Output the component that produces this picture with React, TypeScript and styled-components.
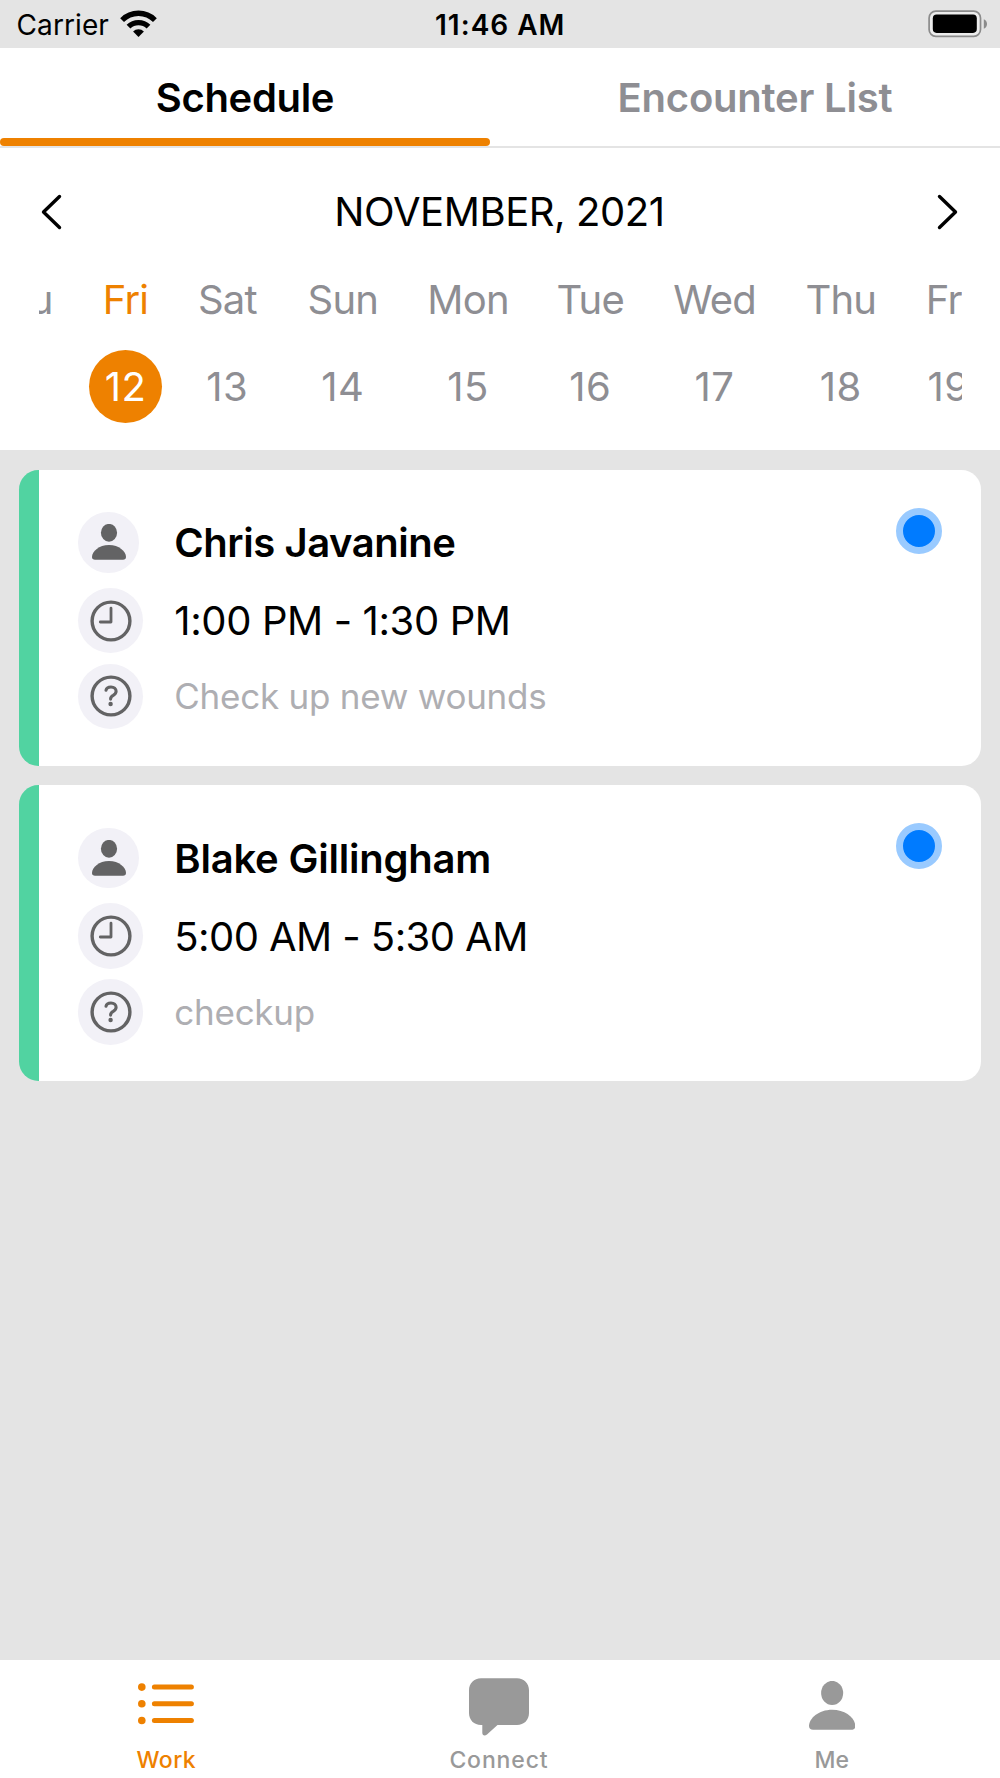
import React from "react";
import styled, { createGlobalStyle } from "styled-components";

const GlobalStyle = createGlobalStyle`
  * { box-sizing: border-box; }
  body {
    margin: 0;
    background: #e4e4e4;
    font-family: Inter, "Liberation Sans", sans-serif;
    color: #000;
  }
`;

const ORANGE = "#ee8100";
const GRAY = "#8e8e93";

const Screen = styled.div`
  display: flex;
  flex-direction: column;
  width: 1000px;
  height: 1778px;
  background: #e4e4e4;
  overflow: hidden;
`;

const StatusBar = styled.header`
  display: grid;
  grid-template-columns: 1fr auto 1fr;
  align-items: center;
  height: 48px;
  padding: 2px 13px 0 16.5px;
  font-size: 28px;
  line-height: 46px;
`;

const Carrier = styled.div`
  display: flex;
  align-items: center;
  gap: 11.5px;
  letter-spacing: 0.1px;

  svg { margin-top: -3px; }
`;

const Clock = styled.div`
  margin-right: 3px;
  font-weight: 600;
  font-size: 28px;
  letter-spacing: 1px;
`;

const BatterySlot = styled.div`
  display: flex;
  justify-content: flex-end;
  margin-top: -2px;
`;

const Tabs = styled.nav`
  display: flex;
  justify-content: space-between;
  height: 100px;
  background: #fff;
  border-bottom: 2px solid #e4e4e4;
`;

const Tab = styled.div<{ $active?: boolean }>`
  display: flex;
  flex-direction: column;
  justify-content: flex-end;
  width: 490px;
  text-align: center;
  font-size: 40px;
  line-height: 48px;
  font-weight: 600;
  letter-spacing: ${(p) => (p.$active ? -0.34 : -0.22)}px;
  color: ${(p) => (p.$active ? "#000" : GRAY)};

  &::after {
    content: "";
    height: 7.7px;
    margin-top: 16.5px;
    border-radius: 4px;
    background: ${(p) => (p.$active ? ORANGE : "transparent")};
  }
`;

const Calendar = styled.section`
  height: 302px;
  background: #fff;
`;

const MonthBar = styled.div`
  display: flex;
  align-items: center;
  justify-content: space-between;
  height: 128px;
  padding: 0 40.5px 0 39.5px;
`;

const Month = styled.h1`
  margin: 0;
  font-size: 40px;
  line-height: 48px;
  font-weight: 400;
  letter-spacing: -0.42px;
`;

const DayStrip = styled.div`
  display: flex;
  gap: 48px;
  margin: 0 38.5px;
  overflow: hidden;
`;

const Day = styled.div<{ $width: number; $selected?: boolean }>`
  display: flex;
  flex: none;
  flex-direction: column;
  align-items: center;
  width: ${(p) => p.$width}px;
  font-size: 40px;
  line-height: 48px;
  white-space: nowrap;
  color: ${(p) => (p.$selected ? ORANGE : GRAY)};

  &:first-child { margin-left: -58.8px; }
`;

const DayName = styled.span`
  letter-spacing: -0.8px;
`;

const DayNumber = styled.span<{ $selected?: boolean }>`
  flex: none;
  width: 73px;
  height: 73px;
  margin-top: 26px;
  padding-top: 1px;
  line-height: 72px;
  text-align: center;
  letter-spacing: 0.5px;
  border-radius: 50%;
  color: ${(p) => (p.$selected ? "#fff" : GRAY)};
  background: ${(p) => (p.$selected ? ORANGE : "transparent")};
`;

const List = styled.main`
  display: flex;
  flex: 1;
  flex-direction: column;
  gap: 19.5px;
  padding: 19.5px 19.5px 0 19px;
`;

const Card = styled.article`
  display: flex;
  align-items: flex-start;
  height: 296px;
  border-radius: 19.5px;
  background: linear-gradient(to right, #51d3a1 20px, #fff 20px);
  padding: 38px 39px 0 59.3px;
`;

const Details = styled.div`
  display: flex;
  flex: 1;
  flex-direction: column;
  padding-top: 4.5px;
  gap: 10.7px;
`;

const Row = styled.div<{ $tall?: boolean }>`
  display: flex;
  align-items: center;
  height: ${(p) => (p.$tall ? 65.2 : 60.7)}px;

  &:first-child { margin-bottom: 4.6px; }
`;

const IconDisc = styled.div<{ $size: number }>`
  display: flex;
  flex: none;
  align-items: center;
  justify-content: center;
  width: ${(p) => p.$size}px;
  height: ${(p) => p.$size}px;
  margin-right: ${(p) => 96 - p.$size}px;
  border-radius: 50%;
  background: #f2f1f7;
  color: #636364;
`;

const Name = styled.h2<{ $spacing: number }>`
  margin: 1.5px 0 0;
  font-size: 40px;
  line-height: 48px;
  font-weight: 600;
  letter-spacing: ${(p) => p.$spacing}px;
`;

const Time = styled.div<{ $spacing: number }>`
  margin-top: 1px;
  font-size: 40px;
  line-height: 48px;
  letter-spacing: ${(p) => p.$spacing}px;
`;

const Reason = styled.div`
  font-size: 35px;
  line-height: 44px;
  letter-spacing: -0.25px;
  color: #aeaeb2;
`;

const StatusDot = styled.div`
  width: 46px;
  height: 46px;
  border: 7px solid #99caff;
  border-radius: 50%;
  background: #007bff;
`;

const TabBar = styled.footer`
  display: grid;
  grid-template-columns: repeat(3, 1fr);
  height: 118.3px;
  padding-right: 2px;
  background: #fff;
`;

const TabItem = styled.div<{ $active?: boolean }>`
  display: flex;
  flex-direction: column;
  align-items: center;
  color: ${(p) => (p.$active ? ORANGE : "#999")};
`;

const TabIcon = styled.div<{ $lift?: number }>`
  display: flex;
  align-items: center;
  justify-content: center;
  height: 58px;
  margin-top: 18px;
  padding-bottom: ${(p) => p.$lift ?? 0}px;
`;

const TabLabel = styled.span<{ $spacing: number }>`
  margin-top: 10.7px;
  font-size: 23px;
  line-height: 28px;
  font-weight: 500;
  letter-spacing: ${(p) => p.$spacing}px;
`;

const WifiIcon = () => (
  <svg width="37" height="28" viewBox="0 0 37 28" fill="none" stroke="#000">
    <path d="M2.1 10.1A23.2 23.2 0 0 1 34.9 10.1" strokeWidth="5.4" />
    <path d="M8.5 16.7A14.2 14.2 0 0 1 28.5 16.7" strokeWidth="5.4" />
    <path d="M13.1 21.5A7.7 7.7 0 0 1 23.9 21.5L18.5 26.9Z" fill="#000" stroke="none" />
  </svg>
);

const BatteryIcon = () => (
  <svg width="59" height="28" viewBox="0 0 59 28">
    <rect x="1.1" y="1.1" width="51.4" height="25.2" rx="6.8" fill="#ececec" stroke="#8b8b8b" strokeWidth="1.7" />
    <rect x="4.8" y="4.6" width="44" height="18.3" rx="3.8" fill="#000" />
    <path d="M55.8 9.2c2 .7 3.2 2.6 3.2 4.8s-1.2 4.1-3.2 4.8z" fill="#8b8b8b" />
  </svg>
);

const Chevron = ({ right }: { right?: boolean }) => (
  <svg width="22" height="38" viewBox="0 0 22 38" fill="none" stroke="#000" strokeWidth="3.4" strokeLinecap="round" strokeLinejoin="round">
    <path d={right ? "M2.5 3.5L18.5 19L2.5 34.5" : "M19.5 3.5L3.5 19L19.5 34.5"} />
  </svg>
);

const PersonIcon = ({ width }: { width: number }) => (
  <svg width={width} height={width * 1.053} viewBox="0 0 34 35.8" fill="currentColor">
    <ellipse cx="17" cy="8.8" rx="8.1" ry="8.9" />
    <path d="M3 35.8h28c1.9 0 3-1 3-2.7C34 27.5 27 21.1 17 21.1S0 27.5 0 33.1c0 1.7 1.1 2.7 3 2.7z" />
  </svg>
);

const ClockIcon = () => (
  <svg width="42" height="42" viewBox="0 0 42 42" fill="none" stroke="currentColor" strokeLinecap="round" strokeLinejoin="round">
    <circle cx="21" cy="21" r="18.9" strokeWidth="3.4" />
    <path d="M21 8.2V22H10.3" strokeWidth="2.8" />
  </svg>
);

const QuestionIcon = () => (
  <svg width="42" height="42" viewBox="0 0 42 42" fill="none" stroke="currentColor" strokeLinecap="round" strokeLinejoin="round">
    <circle cx="21" cy="21" r="18.9" strokeWidth="3.4" />
    <path d="M16 15.3C16.4 13.1 18.3 12 21 12C24 12 26.1 13.7 26.1 16.2C26.1 18.2 25 19.3 23.2 20.4C21.3 21.5 20.6 22.3 20.6 24.1" strokeWidth="3.1" />
    <circle cx="20.6" cy="29" r="2.2" fill="currentColor" stroke="none" />
  </svg>
);

const ListIcon = () => (
  <svg width="56" height="42" viewBox="0 0 56 42" fill="currentColor">
    {[4.1, 20.8, 37.5].map((y) => (
      <g key={y}>
        <circle cx="3.8" cy={y} r="3.8" />
        <rect x="13.9" y={y - 2.5} width="42" height="5" rx="2.5" />
      </g>
    ))}
  </svg>
);

const ChatIcon = () => (
  <svg width="60" height="58" viewBox="0 0 60 58" fill="currentColor">
    <path d="M12 0.2H48C55 0.2 60 5.2 60 12.2V35C60 42 55 47 48 47H28.5L18 56.4C15.8 58.3 13.3 57.5 13.3 54.8V47H12C5 47 0 42 0 35V12.2C0 5.2 5 0.2 12 0.2Z" />
  </svg>
);

const days = [
  { name: "Thu", number: 11, width: 75.1 },
  { name: "Fri", number: 12, width: 45.5, selected: true },
  { name: "Sat", number: 13, width: 62 },
  { name: "Sun", number: 14, width: 73 },
  { name: "Mon", number: 15, width: 81.5 },
  { name: "Tue", number: 16, width: 66.9 },
  { name: "Wed", number: 17, width: 85.7 },
  { name: "Thu", number: 18, width: 70.8 },
  { name: "Fri", number: 19, width: 48.6 },
];

const appointments = [
  { name: "Chris Javanine", nameSpacing: -0.44, time: "1:00 PM - 1:30 PM", timeSpacing: -0.38, reason: "Check up new wounds" },
  { name: "Blake Gillingham", nameSpacing: -0.21, time: "5:00 AM - 5:30 AM", timeSpacing: -0.56, reason: "checkup" },
];

export default function App() {
  return (
    <Screen>
      <GlobalStyle />
      <StatusBar>
        <Carrier>
          Carrier
          <WifiIcon />
        </Carrier>
        <Clock>11:46 AM</Clock>
        <BatterySlot>
          <BatteryIcon />
        </BatterySlot>
      </StatusBar>
      <Tabs>
        <Tab $active>Schedule</Tab>
        <Tab>Encounter List</Tab>
      </Tabs>
      <Calendar>
        <MonthBar>
          <Chevron />
          <Month>NOVEMBER, 2021</Month>
          <Chevron right />
        </MonthBar>
        <DayStrip>
          {days.map((d) => (
            <Day key={d.number} $width={d.width} $selected={d.selected}>
              <DayName>{d.name}</DayName>
              <DayNumber $selected={d.selected}>{d.number}</DayNumber>
            </Day>
          ))}
        </DayStrip>
      </Calendar>
      <List>
        {appointments.map((a) => (
          <Card key={a.name}>
            <Details>
              <Row>
                <IconDisc $size={60.7}>
                  <PersonIcon width={34} />
                </IconDisc>
                <Name $spacing={a.nameSpacing}>{a.name}</Name>
              </Row>
              <Row $tall>
                <IconDisc $size={65.2}>
                  <ClockIcon />
                </IconDisc>
                <Time $spacing={a.timeSpacing}>{a.time}</Time>
              </Row>
              <Row $tall>
                <IconDisc $size={65.2}>
                  <QuestionIcon />
                </IconDisc>
                <Reason>{a.reason}</Reason>
              </Row>
            </Details>
            <StatusDot />
          </Card>
        ))}
      </List>
      <TabBar>
        <TabItem $active>
          <TabIcon $lift={4.5}>
            <ListIcon />
          </TabIcon>
          <TabLabel $spacing={0.4}>Work</TabLabel>
        </TabItem>
        <TabItem>
          <TabIcon>
            <ChatIcon />
          </TabIcon>
          <TabLabel $spacing={0.88}>Connect</TabLabel>
        </TabItem>
        <TabItem>
          <TabIcon $lift={2.5}>
            <PersonIcon width={46.3} />
          </TabIcon>
          <TabLabel $spacing={0}>Me</TabLabel>
        </TabItem>
      </TabBar>
    </Screen>
  );
}
